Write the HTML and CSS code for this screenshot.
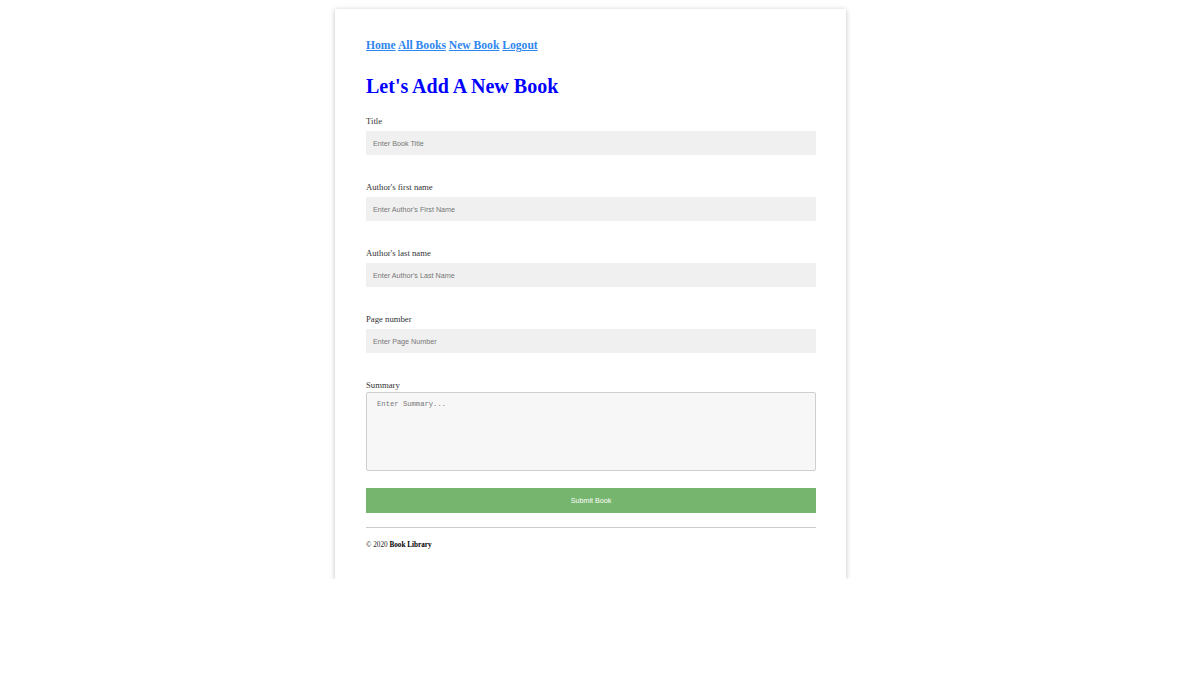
FILE: index.html
```html
<!DOCTYPE html>
<html>
<head>
<meta charset="utf-8">
<link rel="stylesheet" href="styles.css">
</head>
<body>
<div class="page">
  <div class="card">
    <nav class="nav">
      <a href="#">Home</a> <a href="#">All Books</a> <a href="#">New Book</a> <a href="#">Logout</a>
    </nav>
    <h1 class="title">Let's Add A New Book</h1>
    <form class="form">
      <div class="field">
        <label class="label">Title</label>
        <input class="input" type="text" placeholder="Enter Book Title">
      </div>
      <div class="field">
        <label class="label">Author's first name</label>
        <input class="input" type="text" placeholder="Enter Author's First Name">
      </div>
      <div class="field">
        <label class="label">Author's last name</label>
        <input class="input" type="text" placeholder="Enter Author's Last Name">
      </div>
      <div class="field">
        <label class="label">Page number</label>
        <input class="input" type="text" placeholder="Enter Page Number">
      </div>
      <div class="field field-summary">
        <label class="label">Summary</label>
        <textarea class="textarea" placeholder="Enter Summary..."></textarea>
      </div>
      <button class="submit" type="button">Submit Book</button>
    </form>
    <hr class="rule">
    <footer class="footer">© 2020 <b>Book Library</b></footer>
  </div>
</div>
</body>
</html>
```

FILE: styles.css
```css
html, body {
  margin: 0;
  padding: 0;
  background: #fff;
}
.page {
  width: 1181px;
  padding-top: 9px;
}
.card {
  width: 450px;
  margin: 0 auto;
  padding: 29px 30px 29px 31px;
  background: #fff;
  box-shadow: 0 1px 5px rgba(0,0,0,0.25);
  font-family: "Liberation Serif", serif;
  color: #333;
}
.nav {
  font-size: 11.6px;
  font-weight: bold;
  line-height: 16px;
}
.nav a {
  color: #2f86ee;
}
.title {
  margin: 18px 0 15px;
  font-size: 20px;
  line-height: 28px;
  color: #0000ff;
  font-weight: bold;
}
.form {
  display: flex;
  flex-direction: column;
}
.field {
  display: flex;
  flex-direction: column;
  margin-bottom: 26px;
}
.field-summary {
  margin-bottom: 17px;
}
.label {
  font-size: 8.7px;
  line-height: 12px;
  margin-bottom: 4px;
  color: #333;
}
.field-summary .label {
  margin-bottom: 1px;
}
.input {
  box-sizing: border-box;
  width: 450px;
  height: 24px;
  border: none;
  background: #f0f0f0;
  padding: 0 7px;
  font-family: "Liberation Sans", Arial, sans-serif;
  font-size: 7.2px;
  outline: none;
}
.input::placeholder {
  color: #777;
}
.textarea {
  box-sizing: border-box;
  width: 450px;
  height: 79px;
  border: 1px solid #cfcfcf;
  border-radius: 2px;
  background: #f7f7f7;
  padding: 7px 10px;
  font-family: "Liberation Mono", monospace;
  font-size: 7.2px;
  resize: none;
  margin: 0;
  display: block;
}
.textarea::placeholder {
  color: #777;
}
.submit {
  width: 450px;
  height: 25px;
  border: none;
  background: #76b56d;
  color: #fff;
  font-family: "Liberation Sans", Arial, sans-serif;
  font-size: 7.2px;
  font-weight: normal;
  margin: 0;
  padding: 0;
}
.rule {
  margin: 14px 0 0;
  border: none;
  border-top: 1px solid #ccc;
}
.footer {
  margin-top: 12px;
  font-size: 7.2px;
  line-height: 10px;
  color: #222;
}
.footer b {
  color: #000;
}
```
